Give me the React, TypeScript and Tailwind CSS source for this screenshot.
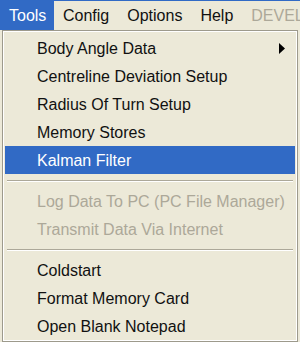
const font = { fontFamily: "'Liberation Sans', Arial, sans-serif" };

type Item =
  | { kind: "item"; label: string; sub?: boolean; active?: boolean; disabled?: boolean }
  | { kind: "sep" };

const items: Item[] = [
  { kind: "item", label: "Body Angle Data", sub: true },
  { kind: "item", label: "Centreline Deviation Setup" },
  { kind: "item", label: "Radius Of Turn Setup" },
  { kind: "item", label: "Memory Stores" },
  { kind: "item", label: "Kalman Filter", active: true },
  { kind: "sep" },
  { kind: "item", label: "Log Data To PC (PC File Manager)", disabled: true },
  { kind: "item", label: "Transmit Data Via Internet", disabled: true },
  { kind: "sep" },
  { kind: "item", label: "Coldstart" },
  { kind: "item", label: "Format Memory Card" },
  { kind: "item", label: "Open Blank Notepad" },
];

export default function App() {
  return (
    <div className="w-[300px] h-[342px] overflow-hidden bg-[#ece9d8] text-[16px]" style={font}>
      <div className="h-[30px] border-t border-[#316ac5] flex items-stretch whitespace-nowrap text-[#111]">
        <div className="shrink-0 w-[54px] bg-[#316ac5] text-white flex items-center pl-[9px]">Tools</div>
        <div className="shrink-0 flex items-center px-[9px]">Config</div>
        <div className="shrink-0 flex items-center px-[9px]">Options</div>
        <div className="shrink-0 flex items-center px-[9px]">Help</div>
        <div className="shrink-0 flex items-center pl-[9px] text-[#aca899]">DEVELOPER</div>
      </div>
      <div className="ml-[2px] w-[296px] h-[312px] border border-[#9d9a8c] bg-white p-px">
        <div className="h-full bg-[#ece9d8] px-px pt-[2px]">
          {items.map((it, i) =>
            it.kind === "sep" ? (
              <div key={i} className="h-[13px] flex flex-col justify-center px-[2px]">
                <div className="h-px bg-[#aca899]" />
                <div className="h-px bg-white" />
              </div>
            ) : (
              <div
                key={i}
                className={`h-[28px] flex items-center pl-[32px] pr-[8px] ${
                  it.active ? "bg-[#316ac5] text-white" : it.disabled ? "text-[#aca899]" : "text-[#111]"
                }`}
              >
                <span className="flex-1 pt-px">{it.label}</span>
                {it.sub && (
                  <svg width="6" height="11" viewBox="0 0 6 11" className="mr-[2px]">
                    <path d="M0 0 L6 5.5 L0 11 Z" fill="#000" />
                  </svg>
                )}
              </div>
            )
          )}
        </div>
      </div>
    </div>
  );
}
